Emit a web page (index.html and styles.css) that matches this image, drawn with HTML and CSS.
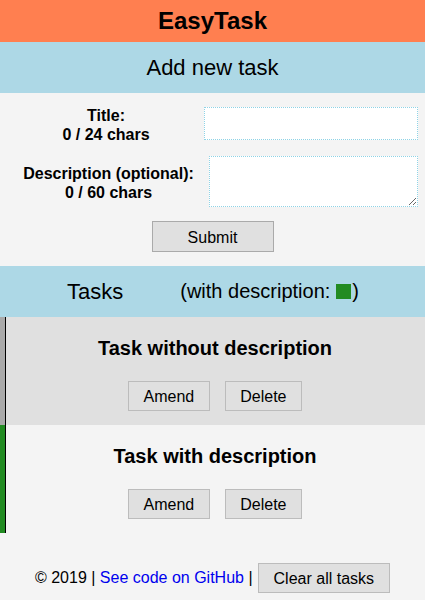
FILE: index.html
```html
<!DOCTYPE html>
<html lang="en">
<head>
<meta charset="utf-8">
<title>EasyTask</title>
<link rel="stylesheet" href="styles.css">
</head>
<body>
<header class="app-header">EasyTask</header>
<section class="band">Add new task</section>
<form class="add-form">
  <div class="form-row">
    <label class="form-label" for="title">Title:<br>0 / 24 chars</label>
    <input class="title-input" id="title" type="text">
  </div>
  <div class="form-row">
    <label class="form-label" for="desc">Description (optional):<br>0 / 60 chars</label>
    <textarea class="desc-input" id="desc"></textarea>
  </div>
  <div class="submit-row">
    <button class="btn submit-btn" type="button">Submit</button>
  </div>
</form>
<section class="band tasks-band">
  <span class="tasks-title">Tasks</span>
  <span class="tasks-legend">(with description: <span class="legend-box"></span>)</span>
</section>
<div class="task task-plain">
  <div class="task-title">Task without description</div>
  <div class="task-actions">
    <button class="btn task-btn" type="button">Amend</button>
    <button class="btn task-btn" type="button">Delete</button>
  </div>
</div>
<div class="task task-desc">
  <div class="task-title">Task with description</div>
  <div class="task-actions">
    <button class="btn task-btn" type="button">Amend</button>
    <button class="btn task-btn" type="button">Delete</button>
  </div>
</div>
<footer class="app-footer">
  <span>© 2019 | <a class="gh-link" href="#">See code on GitHub</a> |</span>
  <button class="btn clear-btn" type="button">Clear all tasks</button>
</footer>
</body>
</html>
```
FILE: styles.css
```css
html, body {
  margin: 0;
  padding: 0;
  background: #f4f4f4;
  font-family: "Liberation Sans", Arial, sans-serif;
  color: #000;
}

.app-header {
  background: #ff7f50;
  height: 42px;
  line-height: 42px;
  text-align: center;
  font-size: 24px;
  font-weight: bold;
}

.band {
  background: #add8e6;
  height: 51px;
  display: flex;
  align-items: center;
  justify-content: center;
  font-size: 22px;
}

.add-form {
  display: flex;
  flex-direction: column;
  gap: 14px;
  padding: 12px 7px 14px 8px;
  margin: 0;
}

.form-row {
  display: flex;
  align-items: center;
}

.form-label {
  flex: 1;
  text-align: center;
  font-size: 16px;
  font-weight: bold;
  line-height: 18.5px;
  padding-top: 2px;
  margin-bottom: -2px;
}

.title-input,
.desc-input {
  box-sizing: border-box;
  border: 1px dotted #8fd3e6;
  background: #fff;
  margin: 0;
  font-family: inherit;
}

.title-input {
  width: 214px;
  height: 33px;
}

.desc-input {
  width: 209px;
  height: 51px;
}

.submit-row {
  display: flex;
  justify-content: center;
  padding-right: 1px;
}

.btn {
  box-sizing: border-box;
  font-family: "Liberation Sans", Arial, sans-serif;
  font-size: 16px;
  color: #000;
  background: #e0e0e0;
  border: 1px solid #bcbcbc;
  border-radius: 0;
  margin: 0;
}

.submit-btn {
  border-color: #aaa;
  padding: 6px 35px 4px;
  line-height: 19px;
  width: 122px;
  height: 31px;
}

.tasks-band {
  gap: 57px;
}

.tasks-title {
  margin-left: 1px;
}

.tasks-legend {
  font-size: 20px;
  display: flex;
  align-items: center;
}

.legend-box {
  display: inline-block;
  width: 15px;
  height: 15px;
  background: #228b22;
  margin-left: 6px;
  margin-right: 1px;
}

.task {
  border-left: 5px solid #a9a9a9;
  box-shadow: inset 1px 0 0 #000;
  padding: 19px 0 14px;
  display: flex;
  flex-direction: column;
  align-items: center;
  gap: 21px;
}

.task-plain {
  background: #e0e0e0;
}

.task-desc {
  background: #f4f4f4;
  border-left-color: #228b22;
}

.task-title {
  font-size: 20px;
  font-weight: bold;
  line-height: 24px;
}

.task-actions {
  display: flex;
  gap: 15px;
}

.task-btn {
  padding: 6px 14.5px 4px;
  line-height: 18px;
  height: 30px;
}

.app-footer {
  display: flex;
  justify-content: center;
  align-items: center;
  gap: 5px;
  padding: 30px 0 8px;
  font-size: 16px;
}

.gh-link {
  color: #0000ee;
  text-decoration: none;
}

.clear-btn {
  padding: 6px 15px 4px;
  line-height: 18px;
  height: 30px;
}
```
